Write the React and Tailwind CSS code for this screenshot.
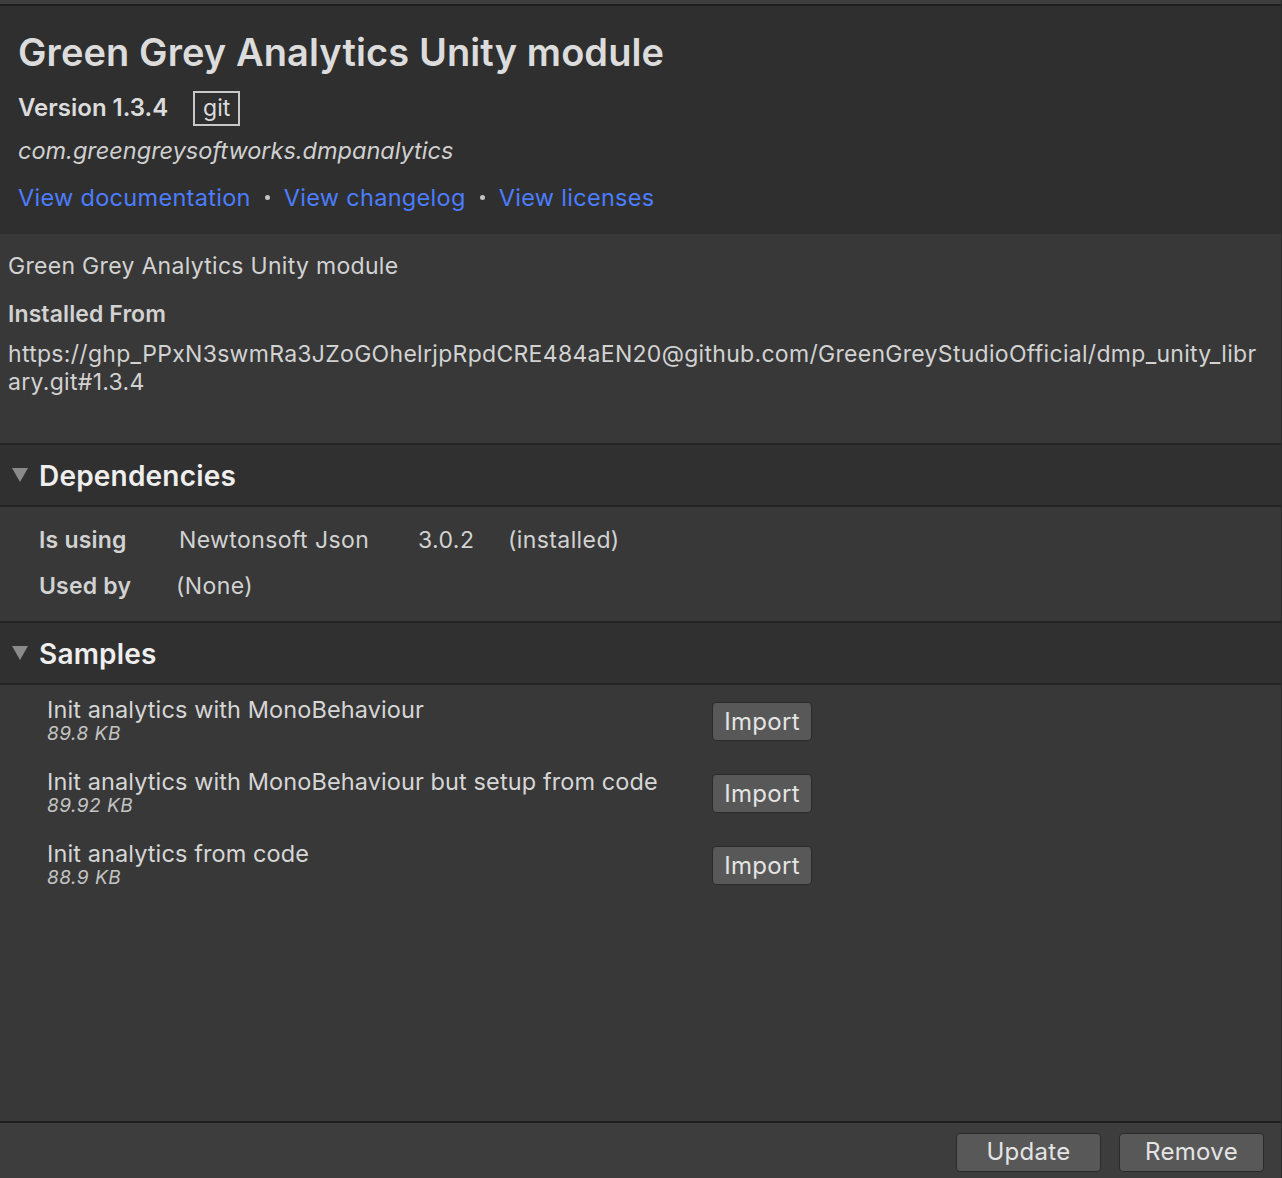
import React from 'react';

const font = { fontFamily: 'Inter, "Noto Sans", sans-serif' };

function Triangle() {
  return (
    <svg width="16" height="14" viewBox="0 0 16 14" className="shrink-0">
      <polygon points="0,0 16,0 8,14" fill="#8a8a8a" />
    </svg>
  );
}

function SectionHeader({ title }) {
  return (
    <div className="flex items-center h-[64px] bg-[#303030] border-y-2 border-[#242424] pl-[12px]">
      <Triangle />
      <span className="ml-[11px] text-[28px] font-semibold text-[#eeeeee] tracking-[0.2px] pt-[2px]">{title}</span>
    </div>
  );
}

function Btn({ children, className }) {
  return (
    <button className={`bg-[#585858] border border-[#2a2a2a] rounded-[4px] text-[#e4e4e4] leading-none tracking-[0.3px] ${className}`}>
      {children}
    </button>
  );
}

const samples = [
  { name: 'Init analytics with MonoBehaviour', size: '89.8 KB' },
  { name: 'Init analytics with MonoBehaviour but setup from code', size: '89.92 KB' },
  { name: 'Init analytics from code', size: '88.9 KB' },
];

export default function App() {
  return (
    <div style={font} className="w-[1282px] h-[1178px] bg-[#383838] flex flex-col border-r border-[#2a2a2a] overflow-hidden">
      <div className="h-[4px] bg-[#3e3e3e]" />
      <div className="h-[2px] bg-[#1e1e1e]" />

      <div className="bg-[#2f2f2f] pl-[18px] pt-[24px] h-[228px]">
        <h1 className="text-[38px] font-semibold text-[#dcdcdc] leading-[44px] tracking-[0.1px]">Green Grey Analytics Unity module</h1>
        <div className="flex items-center mt-[16px]">
          <span className="text-[24px] font-semibold text-[#dcdcdc]">Version 1.3.4</span>
          <span className="ml-[25px] border-2 border-[#c8c8c8] h-[35px] w-[47px] justify-center flex items-center text-[23px] text-[#dcdcdc]">git</span>
        </div>
        <div className="italic text-[23.5px] text-[#d0d0d0] mt-[7px]">com.greengreysoftworks.dmpanalytics</div>
        <div className="flex items-center text-[23.5px] text-[#4c7dff] mt-[12px] tracking-[0.3px]">
          <span>View documentation</span>
          <span className="mx-[14px] w-[5px] h-[5px] rounded-full bg-[#c4c4c4]" />
          <span>View changelog</span>
          <span className="mx-[14px] w-[5px] h-[5px] rounded-full bg-[#c4c4c4]" />
          <span>View licenses</span>
        </div>
      </div>

      <div className="px-[8px] pt-[15px] h-[209px] text-[#d2d2d2] text-[23px] tracking-[0.3px]">
        <div>Green Grey Analytics Unity module</div>
        <div className="font-semibold mt-[13px] tracking-[0.1px]">Installed From</div>
        <div className="mt-[9px] leading-[28px]">
          <div>https://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@github.com/GreenGreyStudioOfficial/dmp_unity_libr</div>
          <div>ary.git#1.3.4</div>
        </div>
      </div>

      <SectionHeader title="Dependencies" />
      <div className="h-[114px] pl-[39px] pt-[16px] text-[23px] text-[#d2d2d2] tracking-[0.4px]">
        <div className="flex items-center h-[34px]">
          <span className="font-semibold w-[140px] tracking-[0.2px]">Is using</span>
          <span className="w-[239px]">Newtonsoft Json</span>
          <span className="w-[90px]">3.0.2</span>
          <span>(installed)</span>
        </div>
        <div className="flex items-center h-[34px] mt-[12px]">
          <span className="font-semibold w-[137px] tracking-[0.2px]">Used by</span>
          <span>(None)</span>
        </div>
      </div>

      <SectionHeader title="Samples" />
      <div className="flex-1 pt-[10px]">
        {samples.map((s) => (
          <div key={s.name} className="flex items-start h-[72px] pl-[47px]">
            <div className="w-[665px]">
              <div className="text-[23.5px] text-[#d6d6d6] leading-[30px] tracking-[0.1px]">{s.name}</div>
              <div className="text-[19px] italic text-[#c4c4c4] leading-[18px] tracking-[0.5px]">{s.size}</div>
            </div>
            <Btn className="w-[100px] h-[39px] mt-[7px] text-[24px]">Import</Btn>
          </div>
        ))}
      </div>

      <div className="h-[2px] bg-[#1e1e1e]" />
      <div className="h-[55px] bg-[#3d3d3d] flex items-center justify-end pr-[17px] pt-[3px] gap-[18px]">
        <Btn className="w-[145px] h-[39px] text-[24px]">Update</Btn>
        <Btn className="w-[145px] h-[39px] text-[24px]">Remove</Btn>
      </div>
    </div>
  );
}
